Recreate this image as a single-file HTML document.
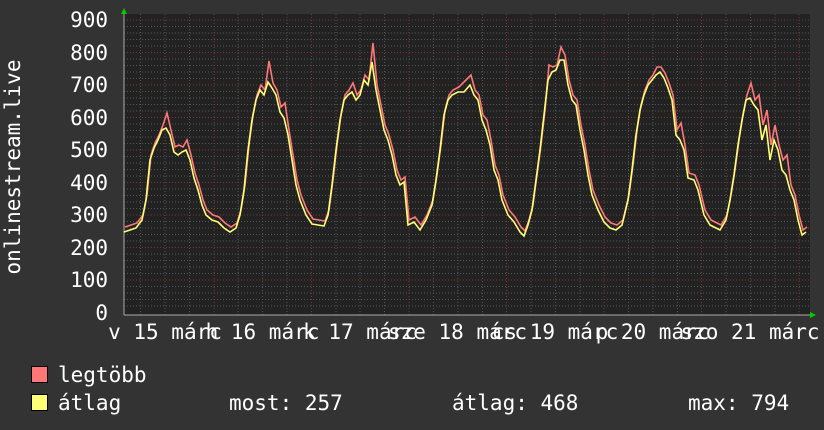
<!DOCTYPE html>
<html><head><meta charset="utf-8"><style>
html,body{margin:0;padding:0;background:#333;}
svg{display:block;}
text{font-family:"DejaVu Sans Mono","Liberation Mono",monospace;fill:#fff;font-size:21px;}
</style></head><body>
<svg width="824" height="430" viewBox="0 0 824 430" xmlns="http://www.w3.org/2000/svg">
<rect width="824" height="430" fill="#333"/>
<rect x="124" y="14" width="686" height="301" fill="#222"/>
<g stroke="#555" stroke-width="1" stroke-dasharray="1,2">
<path d="M124 26.5H810M124 33H810M124 39.5H810M124 46H810M124 59H810M124 65.5H810M124 72H810M124 78.5H810M124 91.5H810M124 98H810M124 104.5H810M124 111H810M124 124H810M124 130.5H810M124 137H810M124 143.5H810M124 156.5H810M124 163H810M124 169.5H810M124 176H810M124 189H810M124 195.5H810M124 202H810M124 208.5H810M124 221.5H810M124 228H810M124 234.5H810M124 241H810M124 254H810M124 260.5H810M124 267H810M124 273.5H810M124 286.5H810M124 293H810M124 299.5H810M124 306H810"/>
<path d="M140.5 14V315M165 14V315M189.5 14V315M238 14V315M262.5 14V315M287 14V315M336 14V315M360 14V315M384.5 14V315M433.5 14V315M458 14V315M482.5 14V315M531 14V315M555.5 14V315M580 14V315M628.5 14V315M653 14V315M677.5 14V315M726 14V315M750.5 14V315M775 14V315"/>
</g>
<g stroke="#7a3535" stroke-width="1" stroke-dasharray="1,2">
<path d="M124 20H810M124 52.5H810M124 85H810M124 117.5H810M124 150H810M124 182.5H810M124 215H810M124 247.5H810M124 280H810"/>
<path d="M214 14V315M311.5 14V315M409 14V315M506.5 14V315M604 14V315M701.5 14V315M799 14V315"/>
</g>
<line x1="124" y1="315" x2="812" y2="315" stroke="#aaa" stroke-width="1"/>
<line x1="124" y1="12" x2="124" y2="315" stroke="#aaa" stroke-width="1"/>
<polygon points="121,14 127,14 124,8" fill="#0c0"/>
<polygon points="810,312 810,318 816,315" fill="#0c0"/>
<polyline fill="none" stroke="#ff7777" stroke-width="1.6" transform="translate(1,-5)" points="124,232 130,230 136,228 142,220 146,200 150,160 154,148 158,140 162,130 166,118 170,135 174,152 178,150 182,152 186,145 190,160 194,178 198,190 202,205 206,215 212,220 218,222 224,228 230,232 236,228 240,215 244,190 248,150 252,120 256,100 260,90 264,95 268,66 272,88 276,95 280,112 284,108 288,135 292,160 296,185 300,200 306,215 312,224 318,225 324,226 328,215 332,185 336,150 340,120 344,100 348,95 352,88 356,100 360,95 364,80 368,85 372,48 376,90 380,110 384,130 388,140 392,155 396,175 400,185 404,182 408,225 414,222 420,230 426,220 432,205 436,180 440,150 444,115 448,100 452,95 458,92 464,86 470,80 474,95 478,100 482,120 486,125 490,145 494,170 498,180 502,200 508,215 514,222 520,232 524,236 528,225 532,210 536,180 540,150 544,115 548,70 552,72 556,70 560,52 564,60 568,85 572,100 576,105 580,130 584,150 588,175 592,195 598,210 604,222 610,228 616,230 622,225 628,200 632,170 636,135 640,110 644,95 648,85 652,80 656,72 660,72 664,78 668,88 672,100 676,135 680,128 684,150 688,178 694,180 698,190 704,215 710,225 716,228 720,230 726,220 730,200 734,175 738,145 742,120 746,100 750,88 754,105 758,100 762,130 766,115 770,150 774,130 778,150 782,165 786,160 790,190 794,200 798,220 802,235 806,232"/>
<polyline fill="none" stroke="#ffff77" stroke-width="1.6" points="124,232 130,230 136,228 142,220 146,200 150,160 154,148 158,140 162,130 166,128 170,135 174,152 178,155 182,152 186,150 190,160 194,178 198,190 202,205 206,215 212,220 218,222 224,228 230,232 236,228 240,215 244,190 248,150 252,120 256,100 260,90 264,95 268,82 272,88 276,95 280,112 284,118 288,135 292,160 296,185 300,200 306,215 312,224 318,225 324,226 328,215 332,185 336,150 340,120 344,100 348,95 352,92 356,100 360,95 364,80 368,85 372,62 376,90 380,110 384,130 388,140 392,155 396,175 400,185 404,182 408,225 414,222 420,230 426,220 432,205 436,180 440,150 444,115 448,100 452,95 458,92 464,92 470,85 474,95 478,100 482,120 486,130 490,145 494,170 498,180 502,200 508,215 514,222 520,232 524,236 528,225 532,210 536,180 540,150 544,115 548,80 552,72 556,70 560,60 564,60 568,85 572,100 576,105 580,130 584,150 588,175 592,195 598,210 604,222 610,228 616,230 622,225 628,200 632,170 636,135 640,110 644,95 648,85 652,80 656,75 660,72 664,78 668,88 672,100 676,135 680,140 684,150 688,178 694,180 698,190 704,215 710,225 716,228 720,230 726,220 730,200 734,175 738,145 742,120 746,100 750,98 754,105 758,110 762,140 766,125 770,160 774,140 778,150 782,170 786,175 790,190 794,200 798,220 802,235 806,232"/>
<g text-anchor="end">
<text x="108" y="27">900</text><text x="108" y="60">800</text><text x="108" y="92">700</text><text x="108" y="125">600</text><text x="108" y="157">500</text><text x="108" y="190">400</text><text x="108" y="222">300</text><text x="108" y="255">200</text><text x="108" y="287">100</text><text x="108" y="320">0</text>
</g>
<text transform="translate(20,167) rotate(-90)" text-anchor="middle">onlinestream.live</text>
<g text-anchor="middle">
<text x="165" y="339">v 15 márc</text>
<text x="262.5" y="339">h 16 márc</text>
<text x="360" y="339">k 17 márc</text>
<text x="457.5" y="339">sze 18 márc</text>
<text x="555" y="339">cs 19 márc</text>
<text x="652.5" y="339">p 20 márc</text>
<text x="750" y="339">szo 21 márc</text>
</g>
<rect x="31.5" y="366.5" width="16" height="16" fill="#ff7777" stroke="#000"/>
<rect x="31.5" y="394.5" width="16" height="16" fill="#ffff77" stroke="#000"/>
<text x="58" y="382">legtöbb</text>
<text x="58" y="410">átlag</text>
<text x="229" y="410">most: 257</text>
<text x="452" y="410">átlag: 468</text>
<text x="688" y="410">max: 794</text>
</svg>
</body></html>
